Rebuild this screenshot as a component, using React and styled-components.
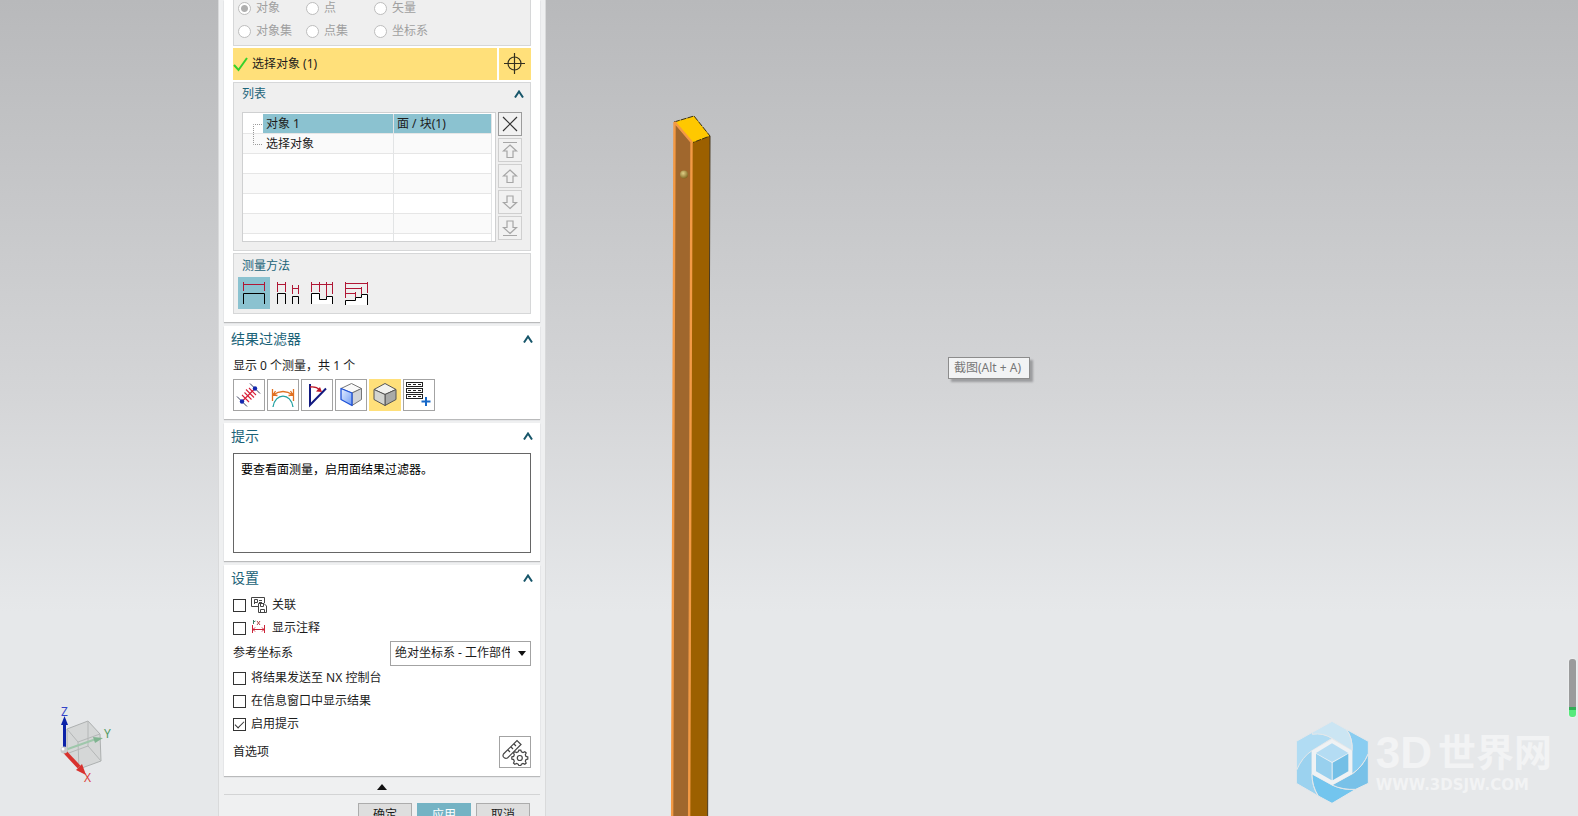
import * as React from 'react'
import styled, { createGlobalStyle, ThemeProvider } from 'styled-components'

const theme = {
  font: "'Noto Sans', 'Noto Sans CJK SC', sans-serif",
  colors: {
    text: '#1c1c1c',
    title: '#1b6378',
    disabled: '#a0a0a0',
    frame: '#eff0f1',
    group: '#efefef',
    line: '#d6d7d8',
    accent: '#8bc2d0',
    highlight: '#ffe07a',
  },
}

const GlobalStyle = createGlobalStyle`
  * {
    box-sizing: border-box;
  }

  body {
    margin: 0;
    overflow: hidden;
  }

  button, input, select, textarea {
    margin: 0;
    padding: 0;
    font: inherit;
    color: inherit;
  }
`

const Page = styled.div`
  display: flex;
  height: 100vh;
  overflow: hidden;
  font-family: ${({ theme }) => theme.font};
  font-size: 12px;
  line-height: 16px;
  color: ${({ theme }) => theme.colors.text};
  background: linear-gradient(#b8b9bb 0%, #d4d5d7 48%, #e6e8ea 75%, #e6e8ea 100%);
`

const LeftView = styled.div`
  flex: none;
  display: flex;
  align-items: flex-end;
  width: 218px;
  padding: 0 0 26px 50px;
`

const Viewport = styled.main`
  position: relative;
  flex: 1;
  overflow: hidden;
`

const Dialog = styled.form`
  flex: none;
  width: 328px;
  padding: 0 5px;
  border: solid #d9dadb;
  border-width: 0 1px;
  background: ${({ theme }) => theme.colors.frame};
`

const Section = styled.section`
  display: flex;
  flex-direction: column;
  gap: ${({ $gap }) => $gap || '0'};
  margin-bottom: 4px;
  padding: 0 9px 8px;
  background: #fff;
  box-shadow: 0 1px 1px #b9babb;
`

const Group = styled.div`
  display: flex;
  flex-direction: column;
  padding: ${({ $pad }) => $pad || '0'};
  border: 1px solid ${({ theme }) => theme.colors.line};
  border-top-width: ${({ $open }) => ($open ? 0 : '1px')};
  background: ${({ theme }) => theme.colors.group};
`

const Title = styled.h2`
  display: flex;
  align-items: center;
  justify-content: space-between;
  height: 26px;
  margin: 0 -2px 4px;
  font-size: 14px;
  font-weight: 400;
  color: ${({ theme }) => theme.colors.title};
`

const SubTitle = styled.h3`
  display: flex;
  align-items: center;
  justify-content: space-between;
  height: ${({ $tall }) => ($tall ? '23px' : '22px')};
  margin: 0 -2px 0 0;
  padding-left: ${({ $tall }) => ($tall ? '4px' : '0')};
  font-size: 12px;
  font-weight: 400;
  color: ${({ theme }) => theme.colors.title};
`

const Collapse = styled.button`
  display: flex;
  border: 0;
  background: none;
  color: #17566a;
`

const RadioGrid = styled.div`
  display: grid;
  grid-template-columns: 68px 68px 1fr;
  gap: 7px 0;
`

const RadioLabel = styled.label`
  display: flex;
  align-items: center;
  gap: 5px;
  height: 16px;
  color: ${({ theme }) => theme.colors.disabled};
`

const Radio = styled.input`
  appearance: none;
  width: 13px;
  height: 13px;
  border: 1px solid #bdbdbd;
  border-radius: 50%;
  background: #fff;

  &:checked {
    background: radial-gradient(circle, #b0b0b0 3px, #fff 4px);
  }
`

const SelectRow = styled.div`
  display: flex;
  gap: 2px;
  height: 32px;
`

const SelectObject = styled.button`
  flex: 1;
  display: flex;
  align-items: center;
  gap: 4px;
  border: 0;
  background: ${({ theme }) => theme.colors.highlight};
`

const IconButton = styled.button`
  display: flex;
  align-items: center;
  justify-content: center;
  width: 32px;
  height: 32px;
  border: ${({ $flat }) => ($flat ? '0' : '1px solid #a3a3a3')};
  border-color: ${({ $active }) => ($active ? '#ffe07a' : '#a3a3a3')};
  background: ${({ $active, $flat, theme }) => {
    if ($active) return $flat ? theme.colors.accent : theme.colors.highlight
    return $flat ? 'transparent' : '#fff'
  }};

  svg {
    flex: none;
  }
`

const Target = styled(IconButton)`
  border: 0;
  background: ${({ theme }) => theme.colors.highlight};
`

const ListBody = styled.div`
  display: flex;
  gap: 2px;
  margin-top: 7px;
`

const TableBox = styled.div`
  flex: 1;
  height: 130px;
  padding: 1px 3px 0 0;
  overflow: hidden;
  border: 1px solid #cfd0d1;
  background: #fff;
`

const Table = styled.table`
  width: 100%;
  border-spacing: 0;
  table-layout: fixed;
`

const Row = styled.tr`
  background: ${({ $odd }) => ($odd ? '#fafafa' : '#fff')};
`

const Cell = styled.td`
  width: ${({ $width }) => $width || 'auto'};
  height: 20px;
  padding: 0 0 0 ${({ $indent }) => ($indent ? 0 : '3px')};
  overflow: hidden;
  white-space: nowrap;
  line-height: 19px;
  border-bottom: 1px solid #e6e6e6;
  border-right: ${({ $indent }) => ($indent ? '0' : '1px solid #e2e4e5')};
  background: ${({ $selected, theme }) =>
    $selected ? theme.colors.accent : 'transparent'};

  svg {
    display: block;
  }
`

const OrderButtons = styled.div`
  display: flex;
  flex-direction: column;
  gap: 2px;
`

const OrderButton = styled.button`
  display: flex;
  align-items: center;
  justify-content: center;
  width: 24px;
  height: 24px;
  border: 1px solid ${({ disabled }) => (disabled ? '#cfcfcf' : '#9c9c9c')};
  background: #f1f1f1;
  color: ${({ disabled }) => (disabled ? '#a6a6a6' : '#333')};

  svg {
    flex: none;
  }
`

const ButtonRow = styled.div`
  display: flex;
  gap: 2px;
`

const Summary = styled.p`
  margin: 0 0 3px;
  line-height: 20px;
`

const Hint = styled.textarea`
  display: block;
  height: 100px;
  padding: 7px;
  border: 1px solid #666;
  outline: 0;
  resize: none;
  background: #fff;
  color: #000;
  line-height: 18px;
`

const Settings = styled.div`
  display: flex;
  flex-direction: column;
  gap: 1px;
  margin-top: -1px;
`

const CheckLabel = styled.label`
  display: flex;
  align-items: center;
  gap: 5px;
  height: 22px;
`

const Checkbox = styled.input`
  appearance: none;
  display: grid;
  width: 13px;
  height: 13px;
  border: 1px solid #333;
  background: #fff;

  &:checked::after {
    content: '';
    width: 8px;
    height: 4px;
    margin: 2px 0 0 1px;
    border: solid #333;
    border-width: 0 0 1px 1px;
    transform: rotate(-45deg);
  }
`

const FieldRow = styled.div`
  display: flex;
  align-items: center;
  justify-content: space-between;
  min-height: 26px;
`

const SelectBox = styled.div`
  position: relative;
  width: 141px;

  svg {
    position: absolute;
    top: 10px;
    right: 5px;
    pointer-events: none;
  }
`

const Select = styled.select`
  appearance: none;
  display: block;
  width: 100%;
  height: 25px;
  padding: 0 20px 0 4px;
  border: 1px solid #a3a3a3;
  border-radius: 0;
  background: #fff;
`

const More = styled.button`
  display: flex;
  align-items: center;
  justify-content: center;
  width: 100%;
  height: 15px;
  border: 0;
  border-bottom: 1px solid #d3d4d5;
  background: none;
`

const Footer = styled.footer`
  display: flex;
  justify-content: flex-end;
  gap: 5px;
  padding: 8px 10px;
`

const FooterButton = styled.button`
  width: 54px;
  height: 24px;
  border: 1px solid ${({ $primary }) => ($primary ? '#74b3c4' : '#acacac')};
  background: ${({ $primary }) => ($primary ? '#74b3c4' : '#dedede')};
  color: ${({ $primary }) => ($primary ? '#fff' : 'inherit')};
`

const Beam = styled.svg`
  position: absolute;
  top: 0;
  left: 120px;
`

const Tooltip = styled.div`
  position: absolute;
  top: 357px;
  left: 402px;
  padding: 2px 8px 2px 5px;
  border: 1px solid #8c8c8c;
  background: #f2f3f4;
  box-shadow: 3px 3px 2px #9c9d9f;
  color: #777;
`

const Watermark = styled.div`
  position: absolute;
  right: 26px;
  bottom: 12px;
  display: flex;
  align-items: center;
  gap: 7px;
  color: #f2f3f4;
  font-family: 'Liberation Sans', 'Noto Sans CJK SC', sans-serif;
  font-weight: 700;
`

const Brand = styled.div`
  display: flex;
  align-items: center;
  gap: 6px;
  font-size: 38px;
  line-height: 46px;
`

const BrandLatin = styled.span`
  font-size: 44px;
`

const Site = styled.div`
  font-family: 'DejaVu Sans', sans-serif;
  font-size: 15px;
  line-height: 18px;
`

const Level = styled.div`
  position: absolute;
  top: 659px;
  right: 2px;
  width: 7px;
  height: 58px;
  border-radius: 3px;
  background: linear-gradient(#9a9b9c 48px, #2fae55 48px, #2fae55 51px, #56ea7c 51px);
  box-shadow: 0 0 2px #fff;
`

const Chevron = () => (
  <svg width="10" height="8" viewBox="0 0 10 8" fill="none" stroke="currentColor" strokeWidth="2">
    <path d="M1 7.5L5 1.5L9 7.5" />
  </svg>
)

const CheckMark = () => (
  <svg width="15" height="16" viewBox="0 0 15 16" fill="none" stroke="#35d02c" strokeWidth="2">
    <path d="M1 9L5.5 14L14 2" />
  </svg>
)

const Crosshair = () => (
  <svg width="22" height="22" viewBox="0 0 22 22" fill="none" stroke="#33301f" strokeWidth="1.2">
    <circle cx="10.5" cy="10.5" r="6.5" />
    <path d="M0 10.5H21M10.5 0V21" />
  </svg>
)

const Tree = ({ last }) => (
  <svg width="20" height="19" fill="none" stroke="#999" strokeDasharray="1 1">
    <path d={last ? 'M10.5 0V10.5H20' : 'M10.5 19V10.5H20'} />
  </svg>
)

const orderPaths = {
  删除: 'M2 2L16 16M16 2L2 16',
  移到顶部: 'M2 1.5H16M9 4L15.5 10H12V16.5H6V10H2.5Z',
  上移: 'M9 3L15.5 9H12V15.5H6V9H2.5Z',
  下移: 'M9 15.5L15.5 9.5H12V3H6V9.5H2.5Z',
  移到底部: 'M2 16.5H16M9 14.5L15.5 8.5H12V2H6V8.5H2.5Z',
}

const methods = [
  {
    name: '自由',
    red: 'M5.5 5V14M26.5 5V14M5.5 7.5H27',
    black: 'M5.5 27V16.5H26.5V27',
  },
  {
    name: '对象对',
    red: 'M5.5 5V15M13.5 5V15M5.5 7.5H13.5M20.5 8V17M26.5 8V17M20.5 11.5H26.5',
    black: 'M5.5 27V16.5H13.5V27M20.5 27V19.5H26.5V27',
  },
  {
    name: '对象链',
    red: 'M5.5 5V15M13.5 5V15M20.5 5V19M26.5 5V17M5.5 7.5H27',
    black: 'M5.5 27V16.5H13.5V22.5H20.5V19.5H26.5V27',
    fill: true,
  },
  {
    name: '从参考对象',
    red: 'M5.5 5V21M27.5 5V16M5.5 6.5H28M5.5 11.5H21.5M21.5 10V17M5.5 16.5H15.5M15.5 15V20',
    black: 'M5.5 28V23.5H15.5V20.5H21.5V17.5H27.5V28',
    fill: true,
  },
]

const MethodIcon = ({ red, black, fill }) => (
  <svg width="32" height="32" fill="none">
    <path d={black} stroke="#000" fill={fill ? '#fff' : 'none'} />
    <path d={red} stroke="#b01735" />
  </svg>
)

const DistanceIcon = () => (
  <svg width="32" height="32" fill="none">
    <path d="M9 22.500L22 9.500" stroke="#d8203a" strokeWidth="1.300" />
    <path d="M9 16L16 23M11.500 13.500L18.500 20.500M13 10.500L21 18.500M16 9L23 16" stroke="#d8203a" strokeWidth="1.100" />
    <path d="M4 17.500L14 27.500M17 4.500L27 14.500" stroke="#3a3f5c" />
    <circle cx="9" cy="22.500" r="2.200" fill="#1328b0" />
    <circle cx="22" cy="9.500" r="2.200" fill="#1328b0" />
  </svg>
)

const CurveIcon = () => (
  <svg width="32" height="32" fill="none" strokeWidth="1.3">
    <path d="M5.500 10V22M26.500 10V22M6 16Q16 9 26 16M6 16L8.500 12M6 16L10.500 16.500M26 16L23.500 12M26 16L21.500 16.500" stroke="#e07020" />
    <path d="M6 28C8 13.500 24 13.500 26 28" stroke="#20a0a0" />
  </svg>
)

const AngleIcon = () => (
  <svg width="32" height="32" fill="none">
    <path d="M9 5V26L25 9.500" stroke="#121a80" strokeWidth="2" />
    <path d="M9 8Q15 7 19 11" stroke="#c0182a" strokeWidth="1.3" />
    <path d="M21 13L15 12.500L19 8Z" fill="#c0182a" />
  </svg>
)

const FaceIcon = () => (
  <svg width="32" height="32" stroke="#777" strokeLinejoin="round">
    <defs>
      <linearGradient id="faceBlue" x1="0" y1="0" x2="1" y2="1">
        <stop offset="0" stopColor="#e8f0ff" />
        <stop offset="1" stopColor="#6f9cf5" />
      </linearGradient>
    </defs>
    <path d="M16.500 4.500L26.500 9.500L17 14L6 9.500Z" fill="#fafafa" />
    <path d="M26.500 9.500V20.500L17 26.500V14Z" fill="#d2d4d8" />
    <path d="M6 9.500L17 14V26.500L6 20.500Z" fill="url(#faceBlue)" stroke="#1c50d8" strokeWidth="1.3" />
  </svg>
)

const BodyIcon = () => (
  <svg width="32" height="32" stroke="#555" strokeLinejoin="round">
    <path d="M16 4.500L27 10.500L16 15.500L5 10.500Z" fill="#f2f2ef" />
    <path d="M27 10.500V20.500L16 26.500V15.500Z" fill="#a9aaa8" />
    <path d="M5 10.500L16 15.500V26.500L5 20.500Z" fill="#d3d4d0" />
  </svg>
)

const TableIcon = () => (
  <svg width="32" height="32" fill="none">
    {[3.5, 9.5, 15.5].map(y => (
      <g key={y} stroke="#222">
        <rect x="3.500" y={y} width="16" height="4" fill="#fff" />
        <path d={`M5 ${y + 2}H18`} strokeDasharray="3 2" strokeWidth="1.2" />
      </g>
    ))}
    <path d="M23 18V27M18.500 22.500H27.500" stroke="#1668c8" strokeWidth="2" />
  </svg>
)

const LinkIcon = () => (
  <svg width="16" height="16" fill="none" stroke="#444">
    <path d="M7 9.500H0.500V0.500H13.500V6M3.500 7V2.500H6.500V5.500H3.500M8 3.500H11M8 5.500H11" />
    <path d="M7.500 6.500H13L15.500 9V15.500H7.500ZM9.500 6.500V9.500H12.500V7M9.500 15V12.500H13.500V15" />
  </svg>
)

const NoteIcon = () => (
  <svg width="16" height="16" fill="none">
    <path d="M1.500 5V13M13.500 5V13M2 9.500H13M4 7.500L2 9.500L4 11.500M11 7.500L13 9.500L11 11.500" stroke="#cc2438" />
    <path d="M2.500 0V4M2.500 2L4.500 1" stroke="#3e7f66" />
    <path d="M6 1L9 5M9 1L6 5" stroke="#b04a4a" />
  </svg>
)

const PreferencesIcon = () => (
  <svg width="28" height="28" viewBox="0 0 28 28" fill="none" stroke="#444" strokeWidth="1.2">
    <path d="M2.500 16L16 2.500L20 6.500L6.500 20Q4 21 2.500 19Q1.500 17.500 2.500 16ZM7 12L9 14M10 9L12 11M13 6L15 8" />
    <path
      d="M25 18.400L26.800 19V21L25 21.600L24.300 23.300L25.200 25L23.800 26.300L22 25.500L20.400 26.200L19.800 27.500H17.900L17.200 26.200L15.600 25.500L13.800 26.300L12.500 25L13.300 23.300L12.600 21.600L10.800 21V19L12.600 18.400L13.300 16.700L12.500 15L13.800 13.700L15.600 14.500L17.200 13.800L17.900 12.200H19.800L20.400 13.800L22 14.500L23.800 13.700L25.200 15L24.300 16.700Z"
      fill="#fff"
    />
    <circle cx="18.800" cy="20" r="2.500" />
  </svg>
)

const Triad = () => (
  <svg width="70" height="96" viewBox="0 -10 70 96" fontFamily="Noto Sans, sans-serif" fontSize="12">
    <path d="M17 25L38 17L50 30L51 57L29 65L17 50Z" fill="#d5d7d7" stroke="#adb0b0" />
    <path d="M17 25L28 38L50 30M28 38L29 65M38 17V42L51 57M38 42L16 50" fill="none" stroke="#b4b7b7" />
    <path d="M15 46L46 35" stroke="#9fc7ab" strokeWidth="2" />
    <path d="M43 33L53 34L45 39Z" fill="#7fb490" />
    <path d="M14.500 46V20" stroke="#0b22a8" strokeWidth="3" />
    <path d="M11 21L14.500 12L18 21Z" fill="#0b22a8" />
    <path d="M15 48L29 63" stroke="#d8322e" strokeWidth="4" />
    <path d="M26 66L32 60L36 71Z" fill="#d8322e" />
    <circle cx="14" cy="46" r="3.500" fill="#c9cbcc" />
    <circle cx="13" cy="45" r="1.500" fill="#fff" />
    <text x="11" y="12" fill="#3544c8">Z</text>
    <text x="54" y="34" fill="#4f9a63">Y</text>
    <text x="34" y="78" fill="#dc3f3a">X</text>
  </svg>
)

const Logo = () => (
  <svg width="74" height="84" viewBox="72 60 222 252">
    <g stroke="#e6e8ea" strokeWidth="3">
      <path d="M76 124L124 97Q160 100 183 115L123 152L76 212Z" fill="#b1dcf3" />
      <path d="M76 212Q94 170 123 152V222Q123 262 142 288L76 250Z" fill="#9bd2ef" />
      <path d="M123 222L183 255Q220 272 254 268L183 310L142 288Q123 258 123 222Z" fill="#73c5ee" />
      <path d="M183 255L243 222Q276 200 292 160V250L254 268Q215 270 183 255Z" fill="#78c1e8" />
      <path d="M243 152Q246 115 226 88L292 124V160Q276 200 243 222Z" fill="#89cdf1" />
      <path d="M124 97L183 64L226 88Q246 116 243 152L183 115Q156 98 124 103Z" fill="#cbe5f3" />
    </g>
    <path d="M183 118L243 152V222L183 255L123 222V152Z" fill="#eff2f4" />
    <path d="M183 130L232 159L183 186L135 159Z" fill="#b4dcf3" />
    <path d="M135 161L182 188V241L135 214Z" fill="#98d0ee" />
    <path d="M185 188L232 161V214L185 241Z" fill="#73bfe6" />
  </svg>
)

const BeamDrawing = () => (
  <Beam width="50" height="1000" viewBox="0 0 50 1000" aria-hidden="true">
    <defs>
      <radialGradient id="knob" cx="0.4" cy="0.35" r="0.7">
        <stop offset="0" stopColor="#e0cf86" />
        <stop offset="1" stopColor="#7d6520" />
      </radialGradient>
    </defs>
    <path d="M8 123L26 142L23 1000H5Z" fill="#a0672d" />
    <path d="M26 142L44 136L41 1000H23Z" fill="#9c6000" />
    <path d="M44 136L41 1000" stroke="#4a3a20" strokeWidth="1" />
    <path d="M9 122L28 116L44 136L26 143Z" fill="#ffc800" />
    <path d="M8 122L28 116L44 136L27 142.500" fill="none" stroke="#3a2f10" strokeDasharray="6 1" />
    <path d="M8.500 122L25.500 142L22.500 1000M8.500 122L5.500 1000" fill="none" stroke="#f39a45" strokeWidth="2.400" />
    <circle cx="18" cy="174.500" r="4" fill="url(#knob)" />
  </Beam>
)

const radios = ['对象', '点', '矢量', '对象集', '点集', '坐标系']

const rows = [['对象 1', '面 / 块(1)'], ['选择对象', ''], [], [], [], [], []]

const filters = [
  { name: '距离', Icon: DistanceIcon },
  { name: '曲线', Icon: CurveIcon },
  { name: '角度', Icon: AngleIcon },
  { name: '面', Icon: FaceIcon },
  { name: '体', Icon: BodyIcon, active: true },
  { name: '更多', Icon: TableIcon },
]

const CollapseButton = ({ label }) => (
  <Collapse type="button" aria-label={`折叠${label}`}>
    <Chevron />
  </Collapse>
)

const SectionTitle = ({ children }) => (
  <Title>
    {children}
    <CollapseButton label={children} />
  </Title>
)

const Check = ({ icon, children, checked }) => (
  <CheckLabel>
    <Checkbox type="checkbox" defaultChecked={checked} />
    {icon}
    {children}
  </CheckLabel>
)

const ObjectSection = () => (
  <Section $gap="2px">
    <Group $open $pad="0 4px 6px">
      <RadioGrid>
        {radios.map((name, i) => (
          <RadioLabel key={name}>
            <Radio type="radio" name="kind" defaultChecked={i === 0} disabled />
            {name}
          </RadioLabel>
        ))}
      </RadioGrid>
    </Group>
    <SelectRow>
      <SelectObject type="button">
        <CheckMark />
        选择对象 (1)
      </SelectObject>
      <Target type="button" aria-label="点构造器">
        <Crosshair />
      </Target>
    </SelectRow>
    <Group $pad="0 8px 8px">
      <SubTitle>
        列表
        <CollapseButton label="列表" />
      </SubTitle>
      <ListBody>
        <TableBox>
          <Table>
            <tbody>
              {rows.map(([name, value], i) => (
                <Row key={i} $odd={i % 2 === 1}>
                  <Cell $indent $width="20px">
                    {i < 2 && <Tree last={i === 1} />}
                  </Cell>
                  <Cell $width="131px" $selected={i === 0}>
                    {name}
                  </Cell>
                  <Cell $selected={i === 0}>{value}</Cell>
                </Row>
              ))}
            </tbody>
          </Table>
        </TableBox>
        <OrderButtons>
          {Object.keys(orderPaths).map((name, i) => (
            <OrderButton key={name} type="button" aria-label={name} disabled={i > 0}>
              <svg width="18" height="18" fill="none" stroke="currentColor" strokeWidth="1.2">
                <path d={orderPaths[name]} />
              </svg>
            </OrderButton>
          ))}
        </OrderButtons>
      </ListBody>
    </Group>
    <Group $pad="0 4px 4px">
      <SubTitle $tall>测量方法</SubTitle>
      <ButtonRow>
        {methods.map((method, i) => (
          <IconButton key={method.name} type="button" aria-label={method.name} $flat $active={i === 0}>
            <MethodIcon {...method} />
          </IconButton>
        ))}
      </ButtonRow>
    </Group>
  </Section>
)

const FilterSection = () => (
  <Section>
    <SectionTitle>结果过滤器</SectionTitle>
    <Summary>显示 0 个测量，共 1 个</Summary>
    <ButtonRow>
      {filters.map(({ name, Icon, active }) => (
        <IconButton key={name} type="button" aria-label={name} $active={active}>
          <Icon />
        </IconButton>
      ))}
    </ButtonRow>
  </Section>
)

const HintSection = () => (
  <Section>
    <SectionTitle>提示</SectionTitle>
    <Hint readOnly aria-label="提示" defaultValue="要查看面测量，启用面结果过滤器。" />
  </Section>
)

const SettingsSection = () => (
  <Section>
    <SectionTitle>设置</SectionTitle>
    <Settings>
      <Check icon={<LinkIcon />}>关联</Check>
      <Check icon={<NoteIcon />}>显示注释</Check>
      <FieldRow>
        <label htmlFor="csys">参考坐标系</label>
        <SelectBox>
          <Select id="csys">
            <option>绝对坐标系 - 工作部件</option>
          </Select>
          <svg width="8" height="5">
            <path d="M0 0H8L4 5Z" fill="#111" />
          </svg>
        </SelectBox>
      </FieldRow>
      <Check>将结果发送至 NX 控制台</Check>
      <Check>在信息窗口中显示结果</Check>
      <Check checked>启用提示</Check>
      <FieldRow>
        首选项
        <IconButton type="button" aria-label="首选项">
          <PreferencesIcon />
        </IconButton>
      </FieldRow>
    </Settings>
  </Section>
)

const App = () => (
  <ThemeProvider theme={theme}>
    <>
      <GlobalStyle />
      <Page>
        <LeftView>
          <Triad />
        </LeftView>
        <Dialog onSubmit={e => e.preventDefault()}>
          <ObjectSection />
          <FilterSection />
          <HintSection />
          <SettingsSection />
          <More type="button" aria-label="收起">
            <svg width="10" height="6">
              <path d="M0 6H10L5 0Z" fill="#111" />
            </svg>
          </More>
          <Footer>
            <FooterButton type="submit">确定</FooterButton>
            <FooterButton type="button" $primary>
              应用
            </FooterButton>
            <FooterButton type="button">取消</FooterButton>
          </Footer>
        </Dialog>
        <Viewport>
          <BeamDrawing />
          <Tooltip role="tooltip">截图(Alt + A)</Tooltip>
          <Watermark>
            <Logo />
            <div>
              <Brand>
                <BrandLatin>3D</BrandLatin>
                世界网
              </Brand>
              <Site>WWW.3DSJW.COM</Site>
            </div>
          </Watermark>
          <Level />
        </Viewport>
      </Page>
    </>
  </ThemeProvider>
)

export default App
